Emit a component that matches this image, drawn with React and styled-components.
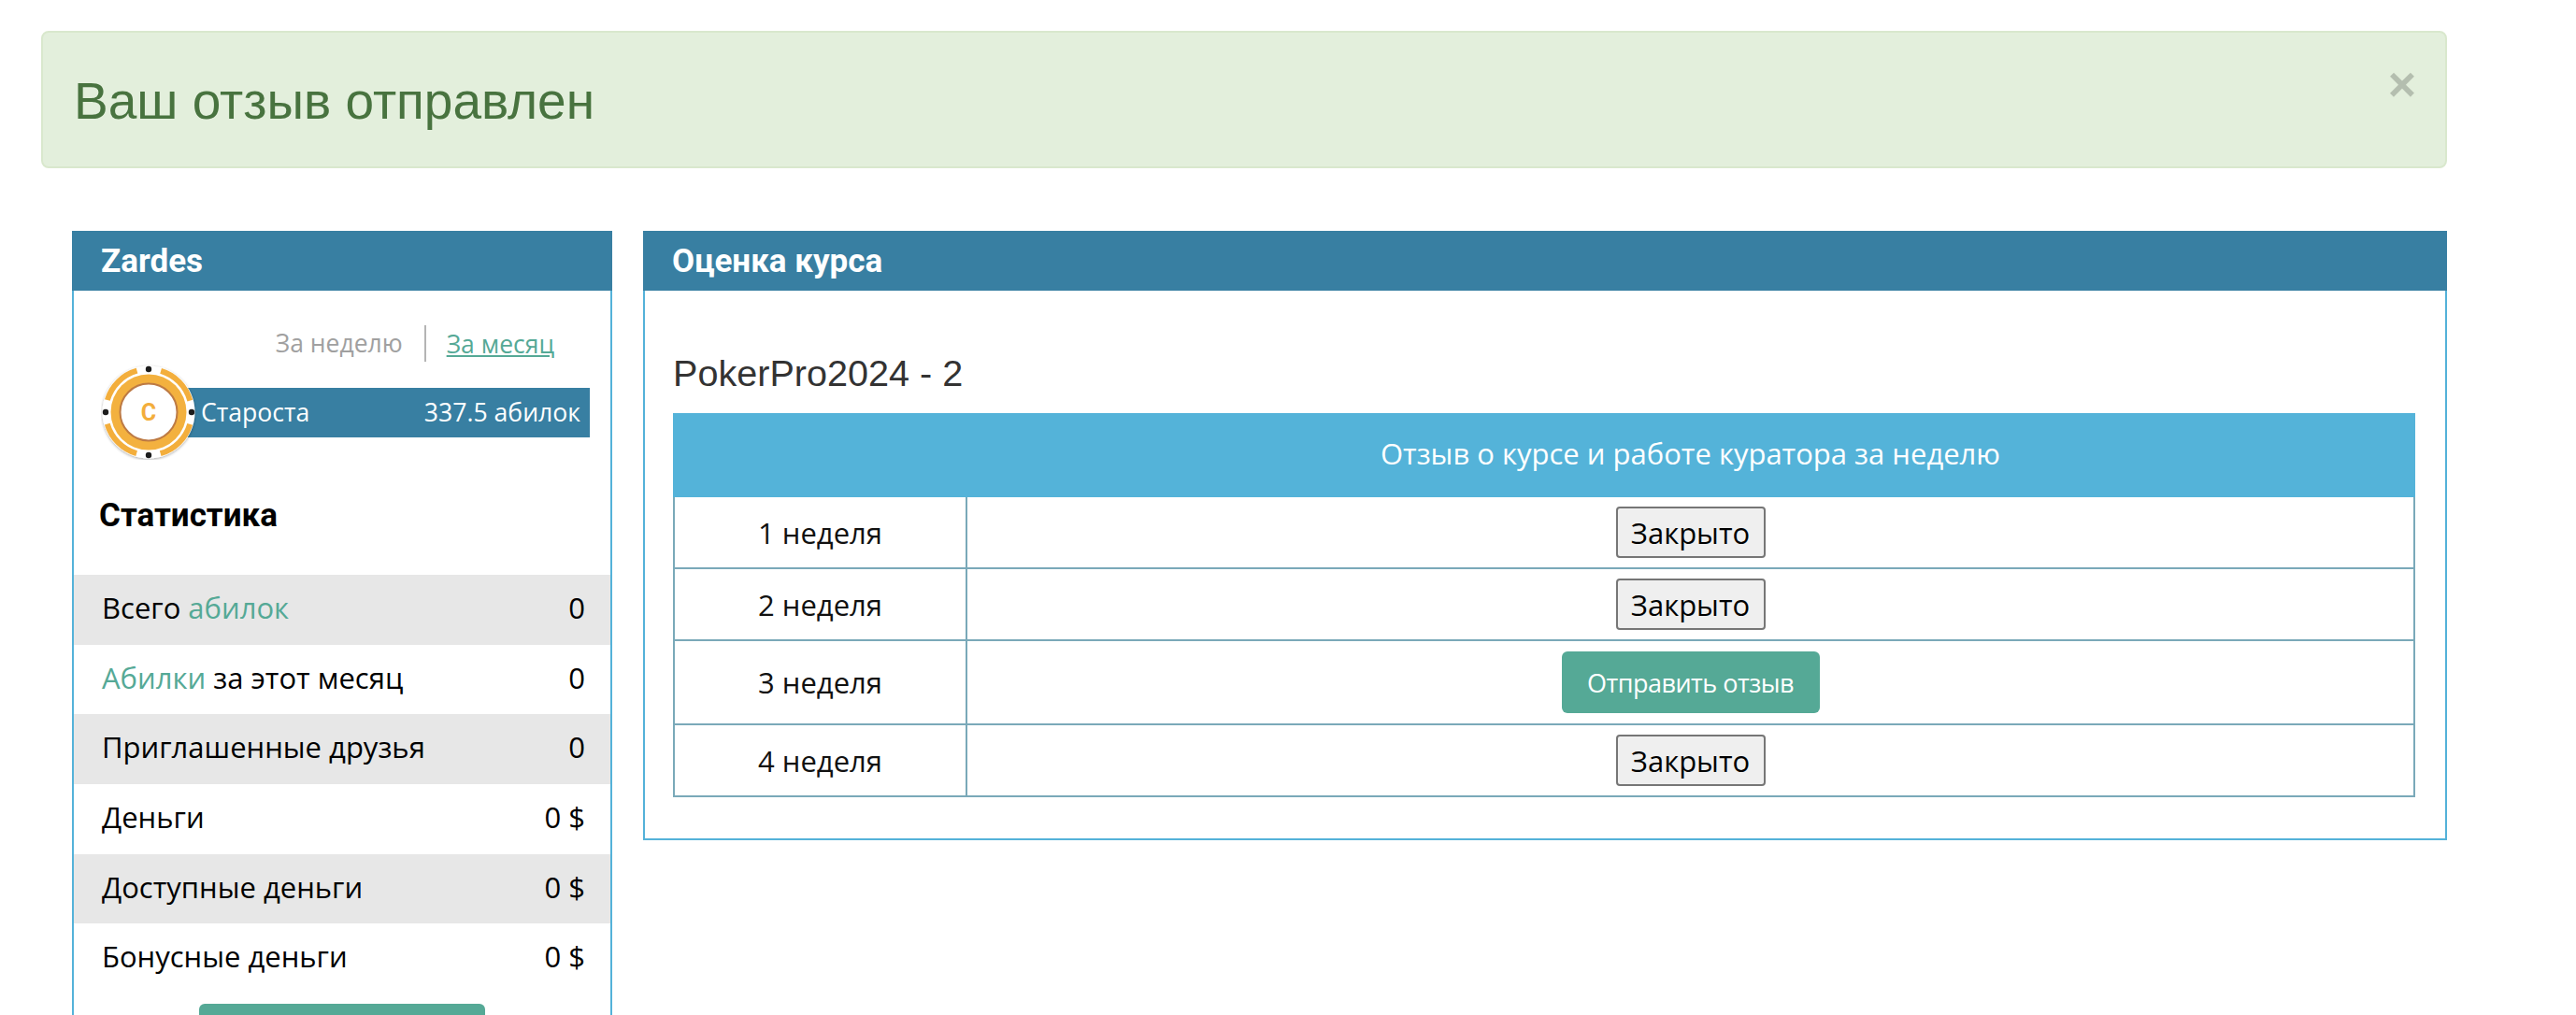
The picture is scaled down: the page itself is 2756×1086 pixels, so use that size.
import React from "react";
import styled, { createGlobalStyle } from "styled-components";

const GlobalStyle = createGlobalStyle`
  html, body {
    margin: 0;
    height: 100%;
    overflow: hidden;
    background: #fff;
  }
  body {
    font-family: "Open Sans", "Liberation Sans", sans-serif;
    color: #000;
  }
`;

const Page = styled.div`
  width: 2574px;
  padding: 33px 0 0 44px;
`;

const Alert = styled.div`
  box-sizing: border-box;
  height: 147px;
  display: flex;
  justify-content: space-between;
  align-items: flex-start;
  padding: 43px 31px 0 33px;
  background: #e3efdc;
  border: 2px solid #d9e8cd;
  border-radius: 8px;
  color: #48733f;
  font-family: "Liberation Sans", Arial, sans-serif;
  font-size: 55px;
  line-height: 60px;
`;

const CloseMark = styled.span`
  font-family: "Liberation Sans", Arial, sans-serif;
  font-weight: 700;
  font-size: 52px;
  line-height: 24px;
  color: #000;
  opacity: 0.2;
`;

const Columns = styled.div`
  display: grid;
  grid-template-columns: 578px 1930px;
  column-gap: 33px;
  align-items: start;
  margin: 67px 0 0 33px;
`;

const Panel = styled.section`
  box-sizing: border-box;
  border: 2px solid #54b2d9;
  border-top: 0;
`;

const PanelHeader = styled.h2`
  height: 64px;
  margin: 0 -2px;
  padding-left: 31px;
  background: #387fa2;
  color: #fff;
  font-family: Roboto, sans-serif;
  font-weight: 700;
  font-size: 35px;
  line-height: 66px;
`;

const Tabs = styled.div`
  display: flex;
  justify-content: flex-end;
  align-items: center;
  height: 39px;
  margin-top: 37px;
  padding-right: 60px;
  font-size: 26.5px;
`;

const TabMuted = styled.span`
  color: #a0a0a0;
  padding-right: 23px;
  border-right: 2px solid #b4b4b4;
  line-height: 39px;
`;

const TabLink = styled.a`
  color: #55a996;
  margin-left: 22px;
  text-decoration: underline;
`;

const Rank = styled.div`
  display: flex;
  align-items: center;
  height: 100px;
  margin: 4px 0 0 29px;
`;

const Chip = styled.svg`
  flex: none;
  width: 102px;
  height: 102px;
  margin-right: -10px;
  position: relative;
  z-index: 1;
`;

const RankBar = styled.div`
  flex: none;
  width: 431px;
  height: 53px;
  box-sizing: border-box;
  display: flex;
  justify-content: space-between;
  align-items: center;
  padding: 0 10px 0 15px;
  background: #387fa2;
  color: #fff;
  font-size: 26.6px;
`;

const StatsTitle = styled.h3`
  margin: 39px 0 41px 27px;
  font-family: Roboto, sans-serif;
  font-weight: 700;
  font-size: 35px;
  line-height: 44px;
`;

const StatRow = styled.div`
  box-sizing: border-box;
  display: flex;
  justify-content: space-between;
  align-items: center;
  height: 74.7px;
  padding: 0 27px 5px 30px;
  background: ${(props) => (props.$shaded ? "#e7e7e7" : "#fff")};
  font-size: 31px;
`;

const Accent = styled.span`
  color: #55a996;
`;

const WideButton = styled.button`
  display: block;
  width: 306px;
  height: 66px;
  margin: 11px auto 0;
  border: 0;
  border-radius: 6px;
  background: #55a996;
`;

const Course = styled.div`
  padding: 0 32px 44px 30px;
`;

const CourseTitle = styled.h3`
  margin: 66px 0 21px;
  font-family: "Liberation Sans", Arial, sans-serif;
  font-weight: 400;
  font-size: 39.6px;
  line-height: 44px;
  color: #333;
`;

const Table = styled.table`
  width: 100%;
  table-layout: fixed;
  border-collapse: collapse;
  font-size: 31px;
`;

const HeadCell = styled.th`
  box-sizing: border-box;
  height: 88px;
  padding: 0 0 4px;
  background: #54b3d9;
  border: 2px solid #54b3d9;
  border-left-color: ${(props) => (props.$divider ? "#7aa9b9" : "#54b3d9")};
  color: #fff;
  font-weight: 400;
  width: ${(props) => props.$width || "auto"};
`;

const Cell = styled.td`
  box-sizing: border-box;
  height: ${(props) => props.$height}px;
  padding: 0;
  border: 2px solid #7aa9b9;
  text-align: center;
  color: #111;
`;

const ClosedButton = styled.button`
  box-sizing: border-box;
  width: 160px;
  height: 55px;
  padding: 0;
  border: 2px solid #767676;
  border-radius: 4px;
  background: #efefef;
  color: #000;
  font-family: "Open Sans", sans-serif;
  font-size: 31px;
  vertical-align: middle;
`;

const SendButton = styled.button`
  box-sizing: border-box;
  width: 276px;
  height: 66px;
  padding: 0;
  border: 0;
  border-radius: 6px;
  background: #55a996;
  color: #fff;
  font-family: "Open Sans", sans-serif;
  font-size: 27px;
  letter-spacing: -0.5px;
  vertical-align: middle;
`;

const stats = [
  { label: "Всего ", accent: "абилок", value: "0" },
  { accent: "Абилки", label: " за этот месяц", value: "0", accentFirst: true },
  { label: "Приглашенные друзья", value: "0" },
  { label: "Деньги", value: "0 $" },
  { label: "Доступные деньги", value: "0 $" },
  { label: "Бонусные деньги", value: "0 $" },
];

const weeks = [
  { name: "1 неделя", height: 77, open: false },
  { name: "2 неделя", height: 77, open: false },
  { name: "3 неделя", height: 90, open: true },
  { name: "4 неделя", height: 77, open: false },
];

const PokerChip = () => {
  const angles = [0, 90, 180, 270];
  return (
    <Chip viewBox="0 0 102 102">
      <defs>
        <filter id="chipShadow" x="-20%" y="-20%" width="140%" height="140%">
          <feDropShadow dx="0" dy="1" stdDeviation="1.5" floodColor="#000" floodOpacity="0.35" />
        </filter>
      </defs>
      <circle cx="51" cy="51" r="49.5" fill="#fff" filter="url(#chipShadow)" />
      <circle
        cx="51"
        cy="51"
        r="46"
        fill="none"
        stroke="#f3ae3c"
        strokeWidth="6"
        strokeDasharray="46.25 26"
        strokeDashoffset="-13"
      />
      <circle cx="51" cy="51" r="40.5" fill="#f3b13f" />
      <circle cx="51" cy="51" r="30.5" fill="#fff" stroke="#bd7a44" strokeWidth="2" />
      {angles.map((a) => (
        <circle
          key={a}
          cx={51 + 46 * Math.cos((a * Math.PI) / 180)}
          cy={51 + 46 * Math.sin((a * Math.PI) / 180)}
          r="3.2"
          fill="#1c1c1c"
        />
      ))}
      <text
        x="51"
        y="60"
        textAnchor="middle"
        fontFamily="Roboto, sans-serif"
        fontWeight="700"
        fontSize="25"
        fill="#f3ae3c"
      >
        C
      </text>
    </Chip>
  );
};

const App = () => {
  return (
    <Page>
      <GlobalStyle />
      <Alert>
        Ваш отзыв отправлен
        <CloseMark>×</CloseMark>
      </Alert>
      <Columns>
        <Panel>
          <PanelHeader>Zardes</PanelHeader>
          <Tabs>
            <TabMuted>За неделю</TabMuted>
            <TabLink>За месяц</TabLink>
          </Tabs>
          <Rank>
            <PokerChip />
            <RankBar>
              <span>Староста</span>
              <span>337.5 абилок</span>
            </RankBar>
          </Rank>
          <StatsTitle>Статистика</StatsTitle>
          {stats.map((row, i) => (
            <StatRow key={row.value + i} $shaded={i % 2 === 0}>
              <span>
                {row.accentFirst ? <Accent>{row.accent}</Accent> : null}
                {row.label}
                {!row.accentFirst && row.accent ? <Accent>{row.accent}</Accent> : null}
              </span>
              <span>{row.value}</span>
            </StatRow>
          ))}
          <WideButton />
        </Panel>
        <Panel>
          <PanelHeader>Оценка курса</PanelHeader>
          <Course>
            <CourseTitle>PokerPro2024 - 2</CourseTitle>
            <Table>
              <thead>
                <tr>
                  <HeadCell $width="313px" />
                  <HeadCell $divider>Отзыв о курсе и работе куратора за неделю</HeadCell>
                </tr>
              </thead>
              <tbody>
                {weeks.map((week) => (
                  <tr key={week.name}>
                    <Cell $height={week.height}>{week.name}</Cell>
                    <Cell $height={week.height}>
                      {week.open ? (
                        <SendButton>Отправить отзыв</SendButton>
                      ) : (
                        <ClosedButton>Закрыто</ClosedButton>
                      )}
                    </Cell>
                  </tr>
                ))}
              </tbody>
            </Table>
          </Course>
        </Panel>
      </Columns>
    </Page>
  );
};

export default App;
